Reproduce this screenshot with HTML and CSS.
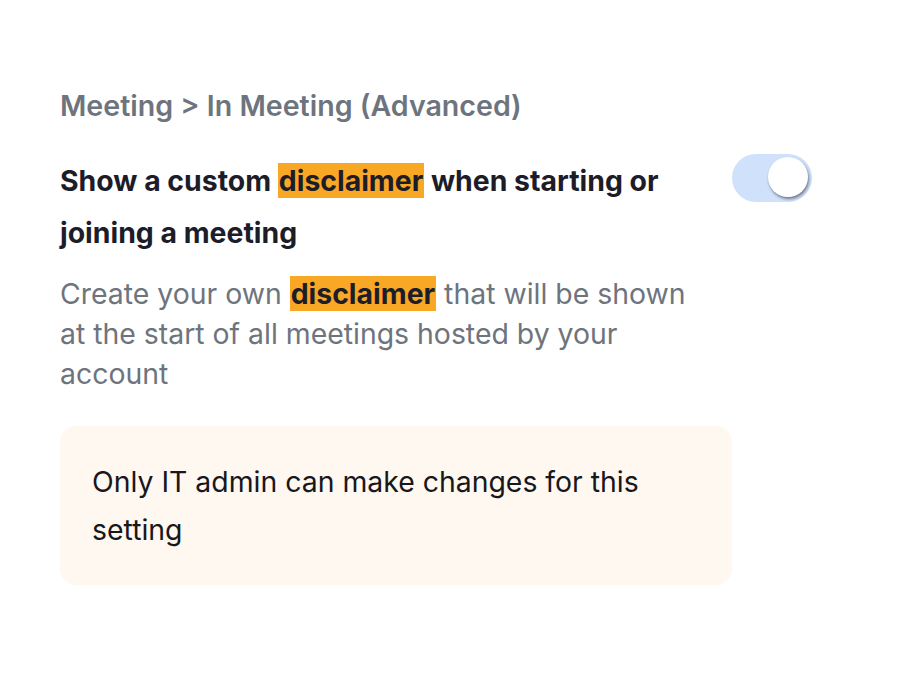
FILE: index.html
```html
<!DOCTYPE html>
<html>
<head>
<meta charset="utf-8">
<link rel="stylesheet" href="styles.css">
</head>
<body>
<main class="panel">
  <div class="breadcrumb">Meeting &gt; In Meeting (Advanced)</div>
  <div class="setting-row">
    <div class="setting-text">
      <div class="setting-title">Show a custom <mark class="hl">disclaimer</mark> when starting or joining a meeting</div>
      <div class="setting-desc">Create your own <mark class="hl hl-bold">disclaimer</mark> that will be shown at the start of all meetings hosted by your account</div>
    </div>
    <div class="toggle" role="switch" aria-checked="true"><span class="knob"></span></div>
  </div>
  <div class="notice">Only IT admin can make changes for this setting</div>
</main>
</body>
</html>
```
FILE: styles.css
```css
html, body {
  margin: 0;
  padding: 0;
  background: #ffffff;
}
body {
  font-family: "Inter", "Noto Sans", sans-serif;
}
.panel {
  padding: 88px 0 0 60px;
  width: 752px;
}
.breadcrumb {
  font-size: 28.6px;
  font-weight: 600;
  color: #6e747d;
  line-height: 36px;
}
.setting-row {
  display: flex;
  justify-content: space-between;
  align-items: flex-start;
  margin-top: 31px;
}
.setting-text {
  width: 640px;
}
.setting-title {
  font-size: 28.4px;
  font-weight: 700;
  color: #1d1d29;
  line-height: 52px;
}
.setting-desc {
  font-size: 28.4px;
  font-weight: 400;
  color: #6e747d;
  line-height: 40px;
  margin-top: 15px;
}
.hl {
  background: #f9a826;
  color: #1d1d29;
  padding: 0 1px;
}
.hl-bold {
  font-weight: 700;
}
.toggle {
  width: 80px;
  height: 48px;
  border-radius: 24px;
  background: #cfe1fb;
  position: relative;
  margin-top: -1px;
  flex-shrink: 0;
}
.knob {
  position: absolute;
  right: 4px;
  top: 3px;
  width: 40px;
  height: 40px;
  border-radius: 50%;
  background: #ffffff;
  box-shadow: 1px 2px 3px rgba(0,0,0,0.45);
}
.notice {
  margin-top: 32px;
  width: 672px;
  box-sizing: border-box;
  background: #fef8f1;
  border-radius: 16px;
  padding: 32px 32px 31px;
  font-size: 28.4px;
  line-height: 48px;
  color: #17171c;
}
```
